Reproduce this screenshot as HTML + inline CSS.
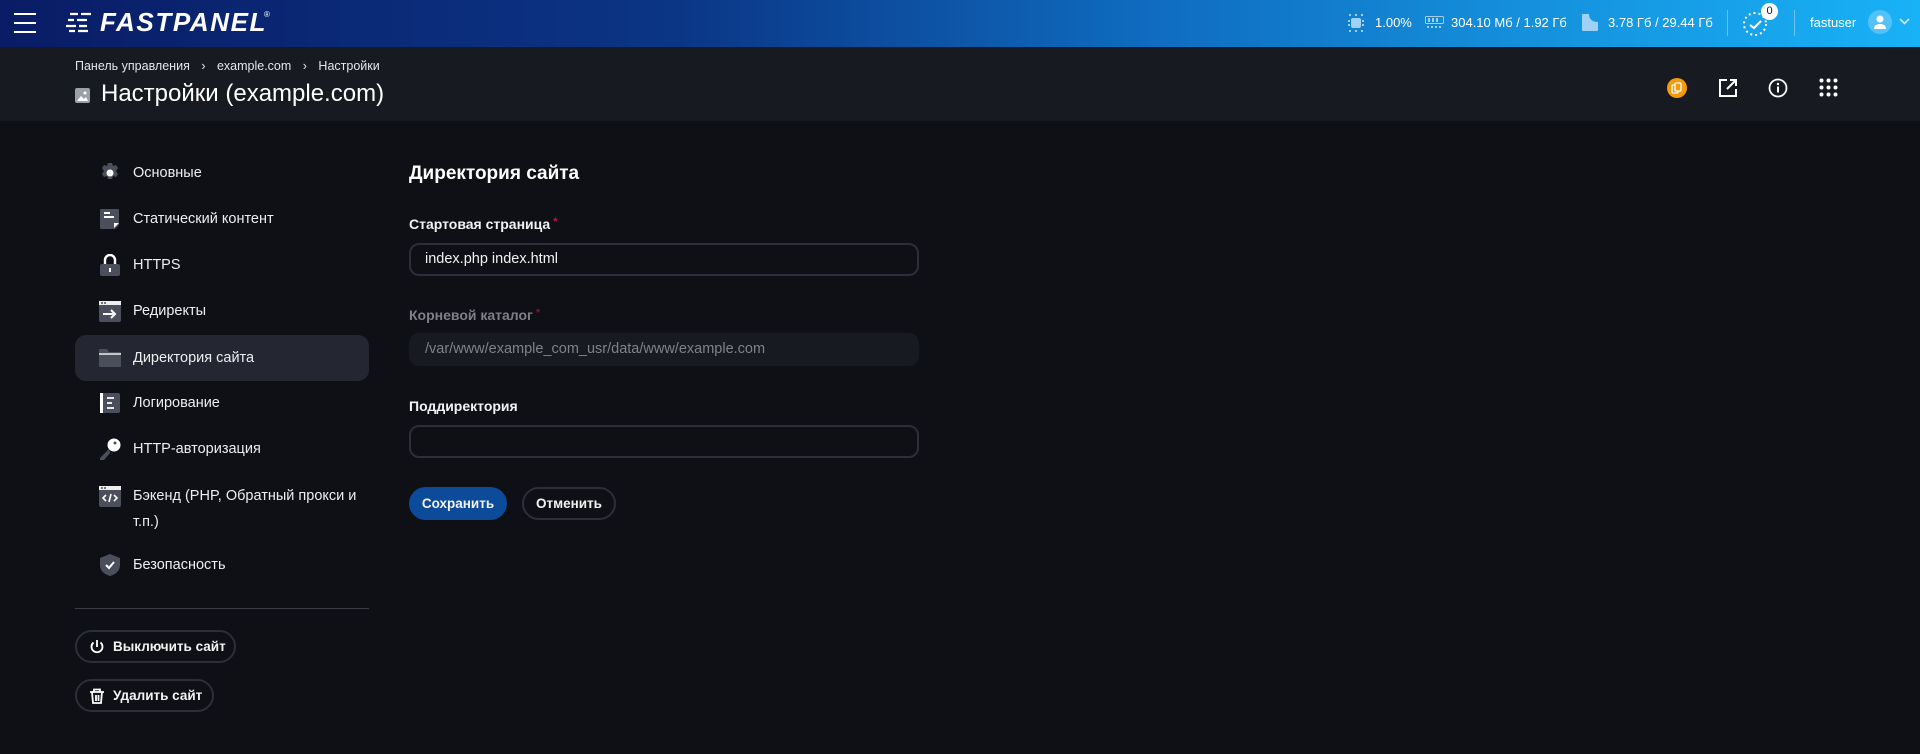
<!DOCTYPE html>
<html><head><meta charset="utf-8"><style>
*{box-sizing:border-box;margin:0;padding:0}
body{width:1920px;height:754px;overflow:hidden;background:#0e1015;font-family:"Liberation Sans","Noto Sans CJK SC",sans-serif;color:#e9eaec;position:relative}
.abs{position:absolute}
.top{left:0;top:0;width:1920px;height:47px;background:linear-gradient(90deg,#0a1c66 0%,#0b3585 35%,#0f6cc0 60%,#1591dc 80%,#18b2f7 100%)}
.hdr{left:0;top:47px;width:1920px;height:74px;background:#181a21}
.tb{font-size:13px;color:#fff;top:15px;white-space:nowrap}
.nav{left:75px;width:294px;height:46px;display:flex;align-items:center;font-size:14.5px;color:#eceef0}
.nav .ic{width:30px;margin-left:20px;margin-right:8px;display:flex;justify-content:center}
.nav.act{background:#242731;border-radius:11px}
.lbl{font-size:14px;font-weight:bold;color:#f1f2f4;left:409px}
.inp{left:409px;width:510px;height:33px;border:2px solid #2b2f3a;border-radius:10px;font-size:14.5px;color:#f1f1f1;padding-left:14px;line-height:29px}
.star{color:#c0143c;font-size:11px;vertical-align:top;margin-left:3px}
.btn{border:2px solid #2b2f3a;border-radius:17px;font-size:13.5px;font-weight:bold;color:#f3f3f3;display:flex;align-items:center}
</style></head><body>
<div class="abs top"></div>
<div class="abs" style="left:14px;top:13px;width:22px;height:2px;background:#fff"></div>
<div class="abs" style="left:14px;top:22px;width:22px;height:2px;background:#fff"></div>
<div class="abs" style="left:14px;top:31px;width:22px;height:2px;background:#fff"></div>
<svg class="abs" style="left:66px;top:11px" width="30" height="22" viewBox="0 0 30 22"><g stroke="#fff" stroke-width="2.2"><path d="M4 3h8M15 3h10M2 9h6M11 9h10M0 15h10M13 15h8M3 20h6M12 20h10"/></g></svg>
<div class="abs" style="left:100px;top:7px;font-size:26px;font-weight:bold;font-style:italic;color:#fff;letter-spacing:1.6px">FASTPANEL</div>
<div class="abs" style="left:264px;top:10px;font-size:8px;color:#fff">®</div>
<svg class="abs" style="left:1348px;top:14px" width="16" height="18" viewBox="0 0 16 18"><rect x="3" y="4" width="10" height="10" rx="2" fill="#9fd0f5"/><g fill="#9fd0f5"><rect x="1" y="0" width="2" height="2"/><rect x="7" y="0" width="2" height="2"/><rect x="13" y="0" width="2" height="2"/><rect x="1" y="16" width="2" height="2"/><rect x="7" y="16" width="2" height="2"/><rect x="13" y="16" width="2" height="2"/><rect x="0" y="6" width="2" height="2"/><rect x="0" y="10" width="2" height="2"/><rect x="14" y="6" width="2" height="2"/><rect x="14" y="10" width="2" height="2"/></g></svg>
<div class="abs tb" style="left:1375px">1.00%</div>
<svg class="abs" style="left:1425px;top:16px" width="19" height="14" viewBox="0 0 19 14"><rect x="0.5" y="0.5" width="18" height="7" rx="1" fill="none" stroke="#9fd0f5"/><g fill="#9fd0f5"><rect x="3" y="2" width="2" height="4"/><rect x="7" y="2" width="2" height="4"/><rect x="11" y="2" width="2" height="4"/><rect x="2" y="10" width="2" height="2"/><rect x="6" y="10" width="2" height="2"/><rect x="10" y="10" width="2" height="2"/><rect x="14" y="10" width="2" height="2"/></g></svg>
<div class="abs tb" style="left:1451px">304.10 Мб / 1.92 Гб</div>
<svg class="abs" style="left:1582px;top:14px" width="16" height="17" viewBox="0 0 16 17"><path d="M1 0h6c0 5 3 8 9 8v8a1 1 0 0 1-1 1H1a1 1 0 0 1-1-1V1a1 1 0 0 1 1-1z" fill="#9fd0f5"/></svg>
<div class="abs tb" style="left:1608px">3.78 Гб / 29.44 Гб</div>
<div class="abs" style="left:1727px;top:10px;width:1px;height:26px;background:rgba(255,255,255,.35)"></div>
<svg class="abs" style="left:1742px;top:10px" width="28" height="28" viewBox="0 0 28 28"><circle cx="13" cy="14" r="11" fill="none" stroke="#fff" stroke-width="2" stroke-dasharray="2 3"/><path d="M8 15l4 3 7-7" fill="none" stroke="#fff" stroke-width="2"/></svg>
<div class="abs" style="left:1761px;top:3px;width:17px;height:17px;border-radius:50%;background:#fff;color:#111;font-size:11px;text-align:center;line-height:17px">0</div>
<div class="abs" style="left:1794px;top:10px;width:1px;height:26px;background:rgba(255,255,255,.35)"></div>
<div class="abs tb" style="left:1810px">fastuser</div>
<div class="abs" style="left:1868px;top:10px;width:24px;height:24px;border-radius:50%;background:rgba(255,255,255,.25)"></div>
<svg class="abs" style="left:1872px;top:14px" width="16" height="16" viewBox="0 0 16 16"><circle cx="8" cy="5" r="3.5" fill="#fff"/><path d="M2 15c0-4 3-5 6-5s6 1 6 5z" fill="#fff"/></svg>
<svg class="abs" style="left:1899px;top:18px" width="11" height="8" viewBox="0 0 11 8"><path d="M1 1l4.5 4.5L10 1" fill="none" stroke="#cfe9fb" stroke-width="1.6"/></svg>

<div class="abs hdr"></div>
<div class="abs" style="left:75px;top:59px;font-size:12.5px;color:#e4e6ea">Панель управления <span style="margin:0 8px">›</span> example.com <span style="margin:0 8px">›</span> Настройки</div>
<svg class="abs" style="left:75px;top:88px" width="15" height="15" viewBox="0 0 15 15"><rect width="15" height="15" rx="2" fill="#9aa0aa"/><path d="M2 13l4-5 3 3 2-2 2 4z" fill="#fff"/><circle cx="10" cy="5" r="1.5" fill="#fff"/></svg>
<div class="abs" style="left:101px;top:80px;font-size:24px;color:#fff">Настройки (example.com)</div>
<div class="abs" style="left:1667px;top:78px;width:20px;height:20px;border-radius:50%;background:#f59a0b"></div>
<svg class="abs" style="left:1671px;top:82px" width="12" height="12" viewBox="0 0 12 12"><rect x="1" y="3" width="6" height="8" rx="1" fill="none" stroke="#fff" stroke-width="1.3"/><rect x="4" y="1" width="6" height="8" rx="1" fill="#f59a0b" stroke="#fff" stroke-width="1.3"/></svg>
<svg class="abs" style="left:1718px;top:78px" width="20" height="20" viewBox="0 0 20 20"><path d="M9 2H2v16h16v-7M12 2h6v6M18 2L9 11" fill="none" stroke="#fff" stroke-width="2"/></svg>
<svg class="abs" style="left:1768px;top:78px" width="20" height="20" viewBox="0 0 20 20"><circle cx="10" cy="10" r="8.5" fill="none" stroke="#fff" stroke-width="1.8"/><rect x="9" y="8.5" width="2" height="6" fill="#fff"/><circle cx="10" cy="6" r="1.2" fill="#fff"/></svg>
<svg class="abs" style="left:1819px;top:78px" width="19" height="19" viewBox="0 0 19 19"><g fill="#fff"><circle cx="2.5" cy="2.5" r="2"/><circle cx="9.5" cy="2.5" r="2"/><circle cx="16.5" cy="2.5" r="2"/><circle cx="2.5" cy="9.5" r="2"/><circle cx="9.5" cy="9.5" r="2"/><circle cx="16.5" cy="9.5" r="2"/><circle cx="2.5" cy="16.5" r="2"/><circle cx="9.5" cy="16.5" r="2"/><circle cx="16.5" cy="16.5" r="2"/></g></svg>

<div class="abs nav" style="top:150px"><span class="ic"><svg width="22" height="22" viewBox="0 0 22 22"><path d="M9 1h4l1 3 3-1 2 3-2 3 2 3-2 3-3-1-1 3H9l-1-3-3 1-2-3 2-3-2-3 2-3 3 1z" fill="#4a4f5b"/><circle cx="11" cy="11" r="3.5" fill="#fff"/></svg></span>Основные</div>
<div class="abs nav" style="top:196px"><span class="ic"><svg width="22" height="22" viewBox="0 0 22 22"><path d="M2 1h17a1 1 0 0 1 1 1v15l-4 4H2a1 1 0 0 1-1-1V2a1 1 0 0 1 1-1z" fill="#4a4f5b"/><path d="M5 5h6M5 9h10" stroke="#fff" stroke-width="2"/><path d="M15 20l5-5h-5z" fill="#fff"/></svg></span>Статический контент</div>
<div class="abs nav" style="top:242px"><span class="ic"><svg width="22" height="22" viewBox="0 0 22 22"><path d="M6 10V6a5 5 0 0 1 10 0v4" fill="none" stroke="#fff" stroke-width="2.4"/><rect x="1" y="10" width="20" height="12" rx="2" fill="#4a4f5b"/><rect x="10" y="14" width="2" height="4" fill="#fff"/></svg></span>HTTPS</div>
<div class="abs nav" style="top:288px"><span class="ic"><svg width="22" height="22" viewBox="0 0 22 22"><rect x="0" y="1" width="22" height="21" rx="2" fill="#4a4f5b"/><rect x="0" y="1" width="22" height="4" fill="#eee"/><circle cx="3" cy="3" r="1" fill="#4a4f5b"/><circle cx="6" cy="3" r="1" fill="#4a4f5b"/><path d="M4 14h12M12 10l4 4-4 4" fill="none" stroke="#fff" stroke-width="2"/></svg></span>Редиректы</div>
<div class="abs nav act" style="top:335px"><span class="ic"><svg width="22" height="20" viewBox="0 0 22 20"><path d="M1 1h7l2 3h11a1 1 0 0 1 1 1v14H1a1 1 0 0 1-1-1V2a1 1 0 0 1 1-1z" fill="#4a4f5b"/><path d="M0 6h22" stroke="#eee" stroke-width="1.5"/></svg></span>Директория сайта</div>
<div class="abs nav" style="top:380px"><span class="ic"><svg width="22" height="22" viewBox="0 0 22 22"><rect x="1" y="1" width="20" height="20" rx="2" fill="#4a4f5b"/><rect x="1" y="1" width="3" height="20" fill="#fff"/><path d="M8 6h7M8 11h5M8 16h7" stroke="#fff" stroke-width="1.8"/></svg></span>Логирование</div>
<div class="abs nav" style="top:426px"><span class="ic"><svg width="22" height="22" viewBox="0 0 22 22"><circle cx="15" cy="7" r="6.5" fill="#fff"/><path d="M10 11L1 20v2h4l6-7" fill="#4a4f5b"/><circle cx="16" cy="5" r="1.5" fill="#4a4f5b"/></svg></span>HTTP-авторизация</div>
<div class="abs nav" style="top:483px;height:50px;align-items:flex-start;line-height:26px;white-space:normal"><span class="ic" style="padding-top:2px"><svg width="22" height="22" viewBox="0 0 22 22"><rect x="0" y="1" width="22" height="21" rx="2" fill="#4a4f5b"/><rect x="0" y="1" width="22" height="4" fill="#eee"/><circle cx="3" cy="3" r="1" fill="#4a4f5b"/><circle cx="6" cy="3" r="1" fill="#4a4f5b"/><path d="M7 10l-3 3 3 3M15 10l3 3-3 3M12 9l-2 8" fill="none" stroke="#fff" stroke-width="1.6"/></svg></span><span style="width:230px">Бэкенд (PHP, Обратный прокси и т.п.)</span></div>
<div class="abs nav" style="top:542px"><span class="ic"><svg width="20" height="22" viewBox="0 0 20 22"><path d="M10 0l10 4v7c0 6-4 9-10 11C4 20 0 17 0 11V4z" fill="#4a4f5b"/><path d="M6 11l3 3 5-6" fill="none" stroke="#fff" stroke-width="2"/></svg></span>Безопасность</div>
<div class="abs" style="left:75px;top:608px;width:294px;height:1px;background:#3a3d46"></div>
<div class="abs btn" style="left:75px;top:630px;width:161px;height:33px;padding-left:12px"><svg width="16" height="16" viewBox="0 0 16 16" style="margin-right:8px"><path d="M8 1v7M4.5 3.5a5.5 5.5 0 1 0 7 0" fill="none" stroke="#fff" stroke-width="1.8"/></svg>Выключить сайт</div>
<div class="abs btn" style="left:75px;top:679px;width:139px;height:33px;padding-left:12px"><svg width="16" height="16" viewBox="0 0 16 16" style="margin-right:8px"><path d="M1 4h14M5 4V1.5h6V4M3 4l1 11h8l1-11M7 7v6M9.5 7v6" fill="none" stroke="#fff" stroke-width="1.8"/></svg>Удалить сайт</div>

<div class="abs" style="left:409px;top:163px;font-size:19px;font-weight:bold;color:#fff">Директория сайта</div>
<div class="abs lbl" style="top:216px">Стартовая страница<span class="star">*</span></div>
<div class="abs inp" style="top:243px">index.php index.html</div>
<div class="abs lbl" style="top:307px;color:#7d8088">Корневой каталог<span class="star" style="color:#7a1a30">*</span></div>
<div class="abs inp" style="top:333px;border-color:#181a21;background:#181a21;color:#7f828a">/var/www/example_com_usr/data/www/example.com</div>
<div class="abs lbl" style="top:398px">Поддиректория</div>
<div class="abs inp" style="top:425px"></div>
<div class="abs btn" style="left:409px;top:487px;width:98px;height:33px;border:none;background:#0c4a9a;justify-content:center">Сохранить</div>
<div class="abs btn" style="left:522px;top:487px;width:94px;height:33px;justify-content:center">Отменить</div>
</body></html>
